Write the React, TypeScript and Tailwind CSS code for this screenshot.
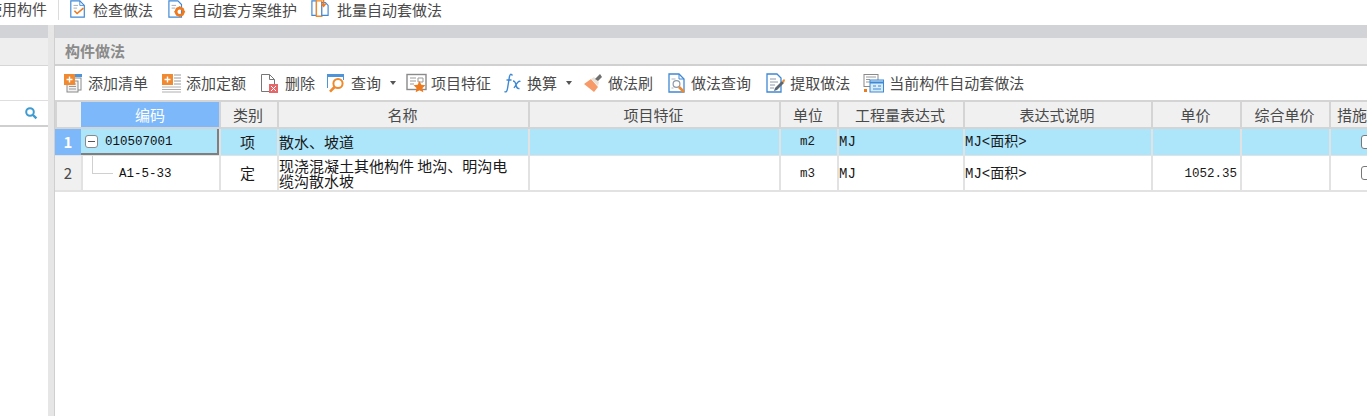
import React from "react";

const cjk = "font-['Noto_Sans_CJK_SC','Liberation_Sans',sans-serif]";
const mono = "font-['Liberation_Mono','Noto_Sans_CJK_SC',monospace]";

const Svg = ({ children, w = 20 }: { children: React.ReactNode; w?: number }) => (
  <svg width={w} height={20} viewBox={`0 0 ${w} 20`} fill="none" className="shrink-0">
    {children}
  </svg>
);

const Plus = ({ x = 0, y = 0 }: { x?: number; y?: number }) => (
  <g>
    <rect x={x} y={y} width="11" height="11" fill="#f0892f" />
    <path d={`M${x + 2.5} ${y + 5.5}h6M${x + 5.5} ${y + 2.5}v6`} stroke="#fff" strokeWidth="1.4" />
  </g>
);

const IconAddList = () => (
  <Svg>
    <rect x="7" y="5" width="11" height="12" fill="#fff" stroke="#8a8a8a" />
    <rect x="4" y="8" width="11" height="11" fill="#f2f2f2" stroke="#8a8a8a" />
    <path d="M6 11h7M6 13.5h7M6 16h7" stroke="#9a9a9a" />
    <rect x="12" y="1" width="7" height="3" fill="#4f94d8" />
    <Plus x={1} y={1} />
  </Svg>
);
const IconAddQuota = () => (
  <Svg>
    <path d="M13 2h7M13 5h7M13 8h7M13 11h7" stroke="#9a9a9a" />
    <path d="M1 14h19M1 16.5h19M1 19h19" stroke="#b0b0b0" />
    <Plus x={1} y={1} />
  </Svg>
);
const IconDelete = () => (
  <Svg>
    <path d="M2.5 1.5h8l5 5v12h-13z" fill="#fff" stroke="#777" />
    <path d="M10.5 1.5v5h5" stroke="#777" />
    <rect x="10" y="11" width="9" height="9" fill="#e4686a" />
    <path d="M12 13l5 5M17 13l-5 5" stroke="#fff" />
  </Svg>
);
const IconQuery = () => (
  <Svg>
    <path d="M1.5 15V3h16v4" stroke="#4f94d8" />
    <rect x="1" y="1" width="17" height="3" fill="#4f94d8" />
    <circle cx="12" cy="10.5" r="4.6" fill="#fff" stroke="#ee8a2c" strokeWidth="2" />
    <path d="M8.6 14L4 18.6" stroke="#ee8a2c" strokeWidth="2.6" />
  </Svg>
);
const IconFeature = () => (
  <Svg w={21}>
    <rect x="1" y="1.5" width="19" height="15" fill="#fff" stroke="#8a8a8a" strokeWidth="1.4" />
    <path d="M4 5h6M4 8h6M4 11h4M12 5h5v4h-5z" stroke="#9a9a9a" />
    <path d="M13.5 8l1.8 3.8 4.2.5-3 2.8.8 4.1-3.8-2-3.8 2 .8-4.1-3-2.8 4.2-.5z" fill="#ee7a1f" />
  </Svg>
);
const IconBrush = () => (
  <Svg>
    <path d="M1 11l7-5 7 8-4 5z" fill="#f59a68" />
    <path d="M8 6l3-2 5 5-1 4z" fill="#e9e2da" />
    <path d="M12 6l5-5 2 3-4 4z" fill="#6f6f6f" />
  </Svg>
);
const IconMethodQuery = () => (
  <Svg>
    <path d="M2 1h10l5 5v13H2z" fill="#fff" stroke="#3f88d4" strokeWidth="1.3" />
    <path d="M12 1v5h5" stroke="#3f88d4" />
    <circle cx="9.5" cy="11" r="3.4" stroke="#8d9aa8" strokeWidth="1.2" />
    <path d="M4.5 6h4M4.5 15h2" stroke="#a8b4c0" />
    <path d="M12 14l5 5" stroke="#ee8a2c" strokeWidth="2.6" />
  </Svg>
);
const IconExtract = () => (
  <Svg>
    <path d="M2 1h10l4 4v14H2z" fill="#fff" stroke="#3f88d4" strokeWidth="1.3" />
    <path d="M5 6h6M5 9h8M5 12h5M5 15h4" stroke="#8c9aa8" />
    <path d="M9 18l3-1 7-7-2-2-7 7z" fill="#5b6670" />
    <path d="M17 8l2-2 1 1-1 3z" fill="#ee8a2c" />
  </Svg>
);
const IconCurrent = () => (
  <Svg w={21}>
    <rect x="1" y="1.5" width="14" height="12" fill="#fff" stroke="#8a8a8a" />
    <path d="M3 4h10M3 6.5h4M3 9h4" stroke="#9a9a9a" />
    <rect x="7" y="7" width="13.5" height="12" fill="#d8ebfa" stroke="#3f88d4" />
    <path d="M7 9.5h13.5" stroke="#3f88d4" strokeWidth="2" />
    <path d="M10 13h3M15 13h3M10 16h8" stroke="#3f88d4" />
    <rect x="1" y="16" width="3" height="3" fill="#ee7a1f" />
  </Svg>
);
const IconCheck = () => (
  <Svg>
    <path d="M2 1h10l5 5v13H2z" fill="#fff" stroke="#3f88d4" strokeWidth="1.3" />
    <path d="M12 1v5h5" stroke="#3f88d4" />
    <path d="M5 6h5M5 9h4" stroke="#9aa6b2" />
    <path d="M6 12l3 3 7-6" stroke="#ee7a1f" strokeWidth="1.8" />
  </Svg>
);
const IconAutoPlan = () => (
  <Svg>
    <path d="M1 1h10l4 4v14H1z" fill="#fff" stroke="#3f88d4" strokeWidth="1.3" />
    <path d="M4 6h5M4 9h4" stroke="#9aa6b2" />
    <circle cx="13" cy="13" r="4" stroke="#ee7a1f" strokeWidth="3" />
    <path d="M13 7v2M13 17v2M7 13h2M17 13h2M9 9l1.5 1.5M15.5 15.5L17 17M17 9l-1.5 1.5M10.5 15.5L9 17" stroke="#ee7a1f" strokeWidth="1.6" />
  </Svg>
);
const IconBatch = () => (
  <Svg>
    <path d="M1 1h5v16H1z" fill="#fff" stroke="#3f88d4" strokeWidth="1.3" />
    <path d="M6 1h6v17H6z" fill="#fff" stroke="#ee8a2c" strokeWidth="1.5" />
    <path d="M12 3h4l3 3v11h-7z" fill="#fff" stroke="#3f88d4" strokeWidth="1.3" />
    <path d="M14 0v6M11.5 4l2.5 3 2.5-3" stroke="#ee7a1f" strokeWidth="1.6" />
  </Svg>
);
const IconFx = () => (
  <svg width="18" height="22" viewBox="0 0 18 22" fill="none" className="shrink-0">
    <path d="M8.5 3.5C7 1.5 6 2 5.5 4.5L3.5 16.5C3 19.5 2 20.5.5 19.5M2.5 8h5" stroke="#3f88d4" strokeWidth="1.4" />
    <path d="M9 9c2 0 2.5 1.5 3 4s1 4 3.5 3.5M16.5 9.5c-2-1-3 1-6.5 6.5" stroke="#3f88d4" strokeWidth="1.3" />
  </svg>
);
const Caret = () => <span className="ml-[4px] h-0 w-0 border-x-[3px] border-t-[4px] border-x-transparent border-t-[#555]" />;

const Tool = ({ icon, label, className = "", gap = "gap-[5px]", children }: { icon: React.ReactNode; label: string; className?: string; gap?: string; children?: React.ReactNode }) => (
  <div className={`flex items-center whitespace-nowrap ${gap} ${className}`}>
    {icon}
    <span>{label}</span>
    {children}
  </div>
);

const Head = ({ children, active = false }: { children?: React.ReactNode; active?: boolean }) => (
  <div
    className={`flex items-center justify-center whitespace-nowrap border-l-2 pr-[2px] ${
      active ? "border-[#7db8fb] bg-[#7db8fb] text-white" : "border-[#d4d4d4] bg-[#f0f0f0] text-[#4a4a4a]"
    }`}
  >
    {children}
  </div>
);

const Cell = ({ children, className = "" }: { children?: React.ReactNode; className?: string }) => (
  <div className={`flex items-center border-l-2 border-[#e2e2e2] text-[#1a1a1a] ${className}`}>{children}</div>
);

const Check = () => <span className="mx-auto block h-[14px] w-[14px] rounded-[3px] border border-[#777] bg-white" />;

const cols = "grid grid-cols-[26px_138px_58px_251px_251px_58px_126px_188px_89px_89px_76px] w-[1350px]";

export default function App() {
  return (
    <div className={`flex h-[416px] w-[1367px] flex-col overflow-hidden bg-white text-[15px] leading-[20px] text-[#4a4a4a] ${cjk}`}>
      {/* top toolbar */}
      <div className="flex h-[25px] shrink-0 items-start overflow-hidden leading-[17px]">
        <span className="-ml-[13px] whitespace-nowrap">使用构件</span>
        <span className="ml-[11px] h-[20px] w-px bg-[#dcdcdc]" />
        <div className="flex h-[18px] items-center [&_svg]:h-[18px] [&_svg]:w-[18px]">
          <Tool icon={<IconCheck />} label="检查做法" gap="gap-[6px]" className="ml-[10px]" />
          <Tool icon={<IconAutoPlan />} label="自动套方案维护" gap="gap-[6px]" className="ml-[15px]" />
          <Tool icon={<IconBatch />} label="批量自动套做法" gap="gap-[8px]" className="ml-[14px]" />
        </div>
      </div>
      <div className="flex min-h-0 flex-1">
        {/* left panel */}
        <div className="flex w-[48px] shrink-0 flex-col">
          <div className="h-[13px] bg-[#d2d3d7]" />
          <div className="h-[28px] border-b border-[#d6d6d6] bg-[#eeeeee]" />
          <div className="h-[35px] border-b border-[#dedede]" />
          <div className="flex h-[26px] items-center justify-end border-b-2 border-[#cfcfcf] pr-[10px]">
            <svg width="14" height="14" viewBox="0 0 14 14" fill="none">
              <circle cx="6" cy="6" r="3.8" stroke="#3d9bd0" strokeWidth="2" />
              <path d="M9 9l3.4 3.4" stroke="#3d9bd0" strokeWidth="2.4" />
            </svg>
          </div>
        </div>
        {/* splitter */}
        <div className="w-[7px] shrink-0 border-r border-[#cfcfcf] bg-[#e6e6e6]" />
        {/* right panel */}
        <div className="flex min-w-0 flex-1 flex-col overflow-hidden">
          <div className="h-[13px] shrink-0 bg-[#d2d3d7]" />
          <div className="flex h-[28px] shrink-0 items-center border-b-2 border-[#d0d0d0] bg-[#eeeeee] pl-[10px] text-[15px] font-bold text-[#8a8a8a]">
            构件做法
          </div>
          <div className="flex h-[36px] shrink-0 items-center border-b-2 border-[#d4d4d4] pl-[8px]">
            <Tool icon={<IconAddList />} label="添加清单" />
            <Tool icon={<IconAddQuota />} label="添加定额" className="ml-[13px]" />
            <Tool icon={<IconDelete />} label="删除" className="ml-[13px]" gap="gap-[6px]" />
            <Tool icon={<IconQuery />} label="查询" className="ml-[11px]">
              <Caret />
            </Tool>
            <Tool icon={<IconFeature />} label="项目特征" className="ml-[10px]" gap="gap-[4px]" />
            <Tool icon={<IconFx />} label="换算" className="ml-[13px]" gap="gap-[5px]">
              <Caret />
            </Tool>
            <Tool icon={<IconBrush />} label="做法刷" className="ml-[11px]" />
            <Tool icon={<IconMethodQuery />} label="做法查询" className="ml-[14px]" gap="gap-[4px]" />
            <Tool icon={<IconExtract />} label="提取做法" className="ml-[14px]" />
            <Tool icon={<IconCurrent />} label="当前构件自动套做法" className="ml-[13px]" />
          </div>
          {/* table */}
          <div className="flex flex-col">
            <div className={`${cols} h-[27px] border-b-2 border-[#d4d4d4]`}>
              <Head />
              <Head active>编码</Head>
              <Head>类别</Head>
              <Head>名称</Head>
              <Head>项目特征</Head>
              <Head>单位</Head>
              <Head>工程量表达式</Head>
              <Head>表达式说明</Head>
              <Head>单价</Head>
              <Head>综合单价</Head>
              <Head>措施项目</Head>
            </div>
            <div className={`${cols} h-[27px] border-b border-[#e2e2e2] bg-[#ade6fb]`}>
              <div className="flex items-center justify-center bg-[#7db8fb] font-bold text-white">1</div>
              <div className={`relative flex items-center border-r-2 border-b-2 border-[#7f7f7f] pl-[4px] text-[12.5px] text-[#111] ${mono}`}>
                <span className="flex h-[13px] w-[13px] items-center justify-center rounded-[3px] border border-[#8a8a8a] bg-white">
                  <span className="h-px w-[7px] bg-[#555]" />
                </span>
                <span className="ml-[7px] mt-[2px]">010507001</span>
              </div>
              <Cell className="justify-center pr-[3px]">项</Cell>
              <Cell>散水、坡道</Cell>
              <Cell />
              <Cell className={`justify-center pr-[3px] text-[12.5px] ${mono}`}>m2</Cell>
              <Cell className={`text-[14px] ${mono}`}>MJ</Cell>
              <Cell className={`text-[14px] ${mono}`}>MJ&lt;面积&gt;</Cell>
              <Cell />
              <Cell />
              <Cell><Check /></Cell>
            </div>
            <div className={`${cols} h-[36px] border-b-2 border-[#e2e2e2]`}>
              <div className="flex items-center justify-center bg-[#f0f0f0] text-[#4a4a4a]">2</div>
              <div className={`relative flex items-center border-l-2 border-[#e2e2e2] pl-[36px] pt-[1px] text-[12.5px] text-[#111] ${mono}`}>
                <span className="absolute left-[9px] top-0 h-[18px] w-[21px] border-b border-l border-[#d0d0d0]" />
                A1-5-33
              </div>
              <Cell className="justify-center pr-[3px]">定</Cell>
              <Cell className="pr-[12px] leading-[15px]">现浇混凝土其他构件 地沟、明沟电缆沟散水坡</Cell>
              <Cell />
              <Cell className={`justify-center pr-[3px] pt-[1px] text-[12.5px] ${mono}`}>m3</Cell>
              <Cell className={`pt-[1px] text-[14px] ${mono}`}>MJ</Cell>
              <Cell className={`pt-[1px] text-[14px] ${mono}`}>MJ&lt;面积&gt;</Cell>
              <Cell className={`justify-end pr-[3px] pt-[1px] text-[12.5px] ${mono}`}>1052.35</Cell>
              <Cell />
              <Cell><Check /></Cell>
            </div>
          </div>
        </div>
      </div>
    </div>
  );
}
